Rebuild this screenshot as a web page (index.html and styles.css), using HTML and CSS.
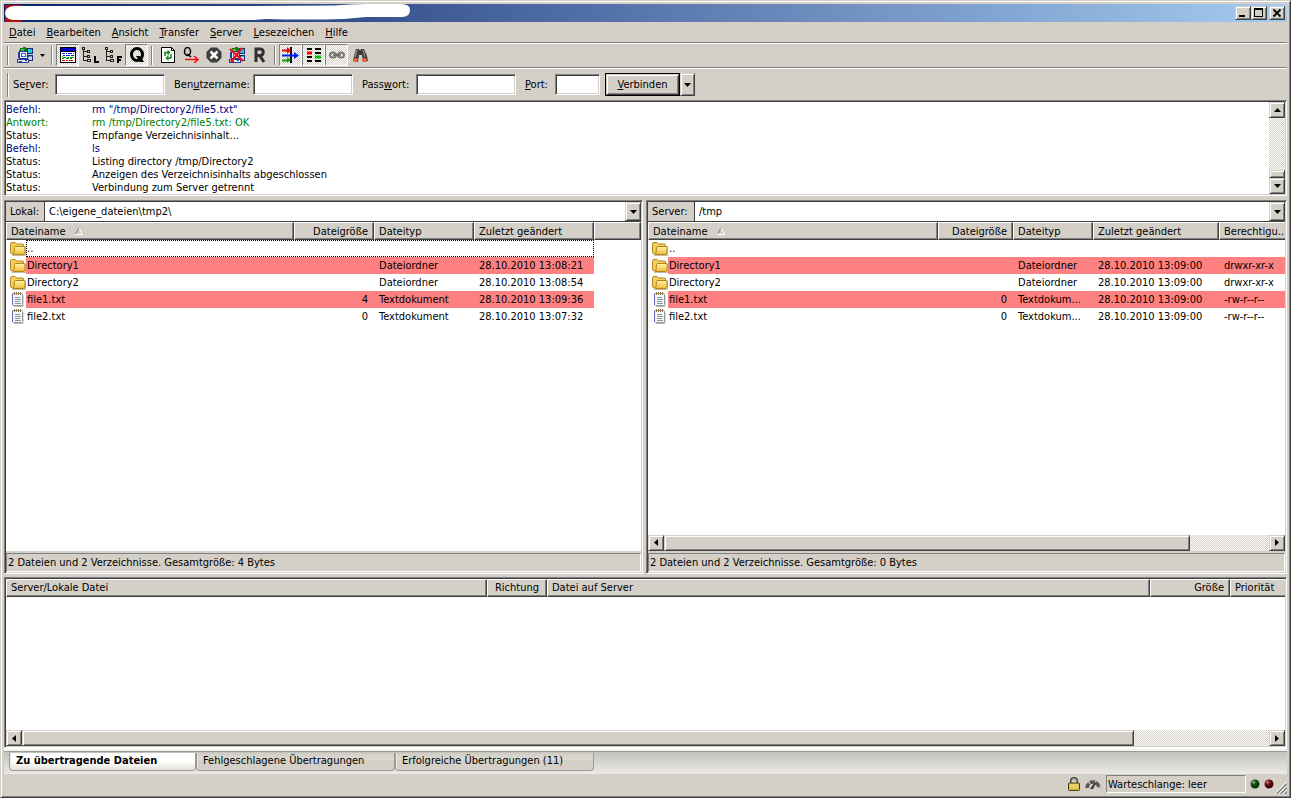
FILE: index.html
```html
<!DOCTYPE html>
<html lang="de">
<head>
<meta charset="utf-8">
<title>Dateiübertragung</title>
<link rel="stylesheet" href="styles.css">
</head>
<body>
<svg class="defs" aria-hidden="true">
  <defs>
    <linearGradient id="gold" x1="0" y1="0" x2="0" y2="1"><stop offset="0" stop-color="#fff6a8"/><stop offset="1" stop-color="#eebb38"/></linearGradient>
    <radialGradient id="green" cx=".35" cy=".3"><stop offset="0" stop-color="#a9c9a9"/><stop offset=".45" stop-color="#1d5f1d"/><stop offset="1" stop-color="#083808"/></radialGradient>
    <radialGradient id="red" cx=".35" cy=".3"><stop offset="0" stop-color="#d0a0a0"/><stop offset=".45" stop-color="#7d1818"/><stop offset="1" stop-color="#400606"/></radialGradient>
  </defs>
  <symbol id="folder" viewBox="0 0 16 16">
    <path d="M2 14.500h13.500v-9" fill="none" stroke="#c4bda4" stroke-width="1"/>
    <path d="M.5 3.500q0-2 1.500-2h3l1.500 1.500h6q1 0 1 1v9h-11q-2 0-2-2z" fill="#f3cf5c" stroke="#b5841c"/>
    <path d="M4.500 6.500q0-1 1-1h9q.500 0 .500.500v6q0 1.500-1.500 1.500h-9.500q-1 0-1-1 1 0 1-1z" fill="url(#gold)" stroke="#b5841c"/>
  </symbol>
  <symbol id="text" viewBox="0 0 16 16">
    <path d="M4 14.500h9v-11" fill="none" stroke="#b8b8ac"/>
    <path d="M2.500 1.500h9q1 0 1 1v10q0 1-1 1h-8l-1-1z" fill="#f6f8f8" stroke="#8f9a9c"/>
    <path d="M2.500 2v11" stroke="#6868bc" stroke-width="1"/>
    <path d="M4.500 0v3M6.500 0v3M8.500 0v3M10.500 0v3" stroke="#8b7a50"/>
    <path d="M5 5.500h5M5 7.500h6M5 9.500h5M5 11.500h6" stroke="#8b9698"/>
  </symbol>
  <symbol id="sites" viewBox="0 0 16 16">
    <g shape-rendering="crispEdges">
      <path d="M10 1h6v6h-6zM10 8h6v6h-6z" fill="#1a2a70"/><path d="M11 2h4v4h-4zM12 9h3v1h-3z" fill="#21c8d8"/><path d="M11 10h4v3h-4z" fill="#d4d0e8"/>
      <path d="M2 4h9v8H2zM1 5h1v6H1zM0 12h12v4H0z" fill="#2238a0"/><path d="M3 5h7v6H3zM1 13h10v2H1z" fill="#e4eef8"/><path d="M4 6h5v4H4z" fill="#3868d0"/><path d="M5 7h3v2H5z" fill="#fff"/><path d="M2 14h3v1H2zM8 13h2v1H8z" fill="#444"/>
      <path d="M2 3h1V1h3V0h3v1h1v3H2z" fill="#107818"/><path d="M4 2h3v2H4z" fill="#37cb37"/>
    </g>
  </symbol>
  <symbol id="log" viewBox="0 0 16 16"><g shape-rendering="crispEdges">
    <path d="M0 0h16v16H0z" fill="#000"/><path d="M1 1h14v3H1z" fill="#0000d0"/><path d="M1 5h14v10H1z" fill="#fff"/>
    <path d="M2 6h3v1H2zM6 6h1v1H6zM8 6h4v1H8zM13 6h1v1h-1zM3 8h2v1H3zM6 8h4v1H6zM11 8h3v1h-3z" fill="#0020f0"/>
    <path d="M2 9h1v1H2zM3 10h3v1H3zM7 10h2v1H7zM10 10h4v1h-4zM2 11h2v1H2zM6 11h3v1H6zM10 11h2v1h-2z" fill="#00a000"/>
    <path d="M2 13h3v1H2zM6 13h2v1H6zM9 13h4v1H9z" fill="#e00000"/></g>
  </symbol>
  <symbol id="tree" viewBox="0 0 17 17"><g shape-rendering="crispEdges" fill="none" stroke="#222">
    <path d="M.5.500h2v2h-2zM5.500 3.500h2v2h-2zM5.500 8.500h2v2h-2zM1.500 3v10.500h4M2 4.500h3M2 9.500h3"/><path d="M5.500 12.500h3v2h-3z"/></g>
  </symbol>
  <symbol id="cross" viewBox="0 0 16 16"><path d="M1 2l13 12M13 1L2 15" stroke="#f01010" stroke-width="2.200" fill="none"/></symbol>
</svg>

<div class="window">
  <header class="titlebar">
    <svg class="stroke" viewBox="0 0 408 20" width="408" height="20" aria-hidden="true">
      <path d="M1 1h17v17H1z" fill="#b01010"/>
      <path d="M10 2H250L330 1.500Q346 0 362 0H397Q406 0 406 6Q406 13 398 13H362L340 15Q300 16 262 15L250 16H9Q1 15 1 9Q1 3 10 2z" fill="#fff"/>
    </svg>
    <div class="winbtns">
      <button class="raised" aria-label="Minimieren"><svg width="12" height="10"><path d="M2 7h6v2H2z"/></svg></button>
      <button class="raised" aria-label="Maximieren"><svg width="12" height="10"><path d="M1 0h9v9H1zM2 2v6h7V2z" fill-rule="evenodd"/></svg></button>
      <button class="raised close" aria-label="Schließen"><svg width="12" height="10"><path d="M2.500 1.500l7 7M9.500 1.500l-7 7" stroke="#000" stroke-width="1.800"/></svg></button>
    </div>
  </header>

  <nav class="menu">
    <button><u>D</u>atei</button><button><u>B</u>earbeiten</button><button><u>A</u>nsicht</button><button><u>T</u>ransfer</button><button><u>S</u>erver</button><button><u>L</u>esezeichen</button><button><u>H</u>ilfe</button>
  </nav>

  <div class="toolbar">
    <span class="grip"></span>
    <button aria-label="Servermanager"><svg width="16" height="16"><use href="#sites"/></svg></button>
    <button class="narrow" aria-label="Serverliste"><svg width="5" height="3"><path d="M0 0h5L2.500 3z"/></svg></button>
    <span class="grip"></span>
    <button class="on" aria-label="Nachrichten"><svg width="16" height="16"><use href="#log"/></svg></button>
    <button aria-label="Lokaler Verzeichnisbaum"><svg width="17" height="17"><use href="#tree"/><path d="M12 9h2v5h3v2h-5z"/></svg></button>
    <button aria-label="Server-Verzeichnisbaum"><svg width="17" height="17"><use href="#tree"/><path d="M12 9h5v2h-3v1h2v2h-2v2h-2z"/></svg></button>
    <button class="on" aria-label="Warteschlange"><svg width="16" height="16"><ellipse cx="8" cy="7.500" rx="5.500" ry="6" fill="none" stroke="#000" stroke-width="3"/><path d="M7 9h4l4 6h-4z"/></svg></button>
    <span class="grip"></span>
    <button aria-label="Aktualisieren"><svg width="14" height="16"><path d="M.5.500h10l3 3v12H.5z" fill="#fff" stroke="#000"/><path d="M10.500.500v3h3" fill="none" stroke="#000"/><path d="M4 9V5.500h3M10 7v4H7" fill="none" stroke="#108818" stroke-width="1.500"/><path d="M6.500 2.500l3 3-3 3zM7.500 8l-3 3 3 3z" fill="#108818"/></svg></button>
    <button aria-label="Warteschlange verarbeiten"><svg width="16" height="16"><ellipse cx="4.500" cy="4.500" rx="3" ry="4" fill="none" stroke="#000" stroke-width="1.500"/><path d="M4 7l4 3" stroke="#000" stroke-width="1.500"/><path d="M2 12.500h13M11 9l4 3.500-4 3.500" fill="none" stroke="#f01010" stroke-width="1.600"/></svg></button>
    <button aria-label="Abbrechen"><svg width="16" height="16"><path d="M5 .500h6L15.500 5v6L11 15.500H5L.5 11V5z" fill="#3c3c3c"/><path d="M4.500 4.500l7 7M11.500 4.500l-7 7" stroke="#fff" stroke-width="2.500"/></svg></button>
    <button aria-label="Trennen"><svg width="16" height="16"><use href="#sites"/><use href="#cross"/></svg></button>
    <button aria-label="Wiederverbinden"><svg width="14" height="16"><path d="M3 15V2h4.500a3.300 3.300 0 010 6.500H4M7 9l4 6" fill="none" stroke="#303030" stroke-width="3"/></svg></button>
    <span class="grip"></span>
    <button class="on" aria-label="Filter"><svg width="17" height="16"><path d="M8 0h2v16H8z"/><path d="M0 3.500h6" stroke="#f00000" stroke-width="2"/><path d="M5 0l4 3.500L5 7z" fill="#f00000"/><path d="M0 8.500h13" stroke="#0020f0" stroke-width="2"/><path d="M12 5l5 3.500-5 3.500z" fill="#0020f0"/><path d="M0 13.500h6" stroke="#10a010" stroke-width="2"/><path d="M5 10l4 3-4 3z" fill="#10a010"/></svg></button>
    <button class="on" aria-label="Verzeichnisvergleich"><svg width="16" height="15"><path d="M1 1h5M9 1h6M9 5h6M1 9h5M1 13h5M9 13h6" stroke="#000" stroke-width="2"/><path d="M1 5h5" stroke="#f00000" stroke-width="3"/><path d="M9 9h6" stroke="#00c000" stroke-width="3"/></svg></button>
    <button class="on" aria-label="Synchronisiertes Browsen"><svg width="16" height="8"><ellipse cx="4" cy="4" rx="3" ry="2.500" fill="none" stroke="#777" stroke-width="2"/><ellipse cx="12" cy="4" rx="3" ry="2.500" fill="none" stroke="#777" stroke-width="2"/><path d="M4 4h8" stroke="#666" stroke-width="1.500"/></svg></button>
    <button aria-label="Suchen"><svg width="16" height="15"><path d="M4 1h3l1 2 1-2h3l3 7 1 5-5 1-1-7H7l-1 7-5-1 1-5z" fill="#3a3a3a"/><path d="M5 2L3 9M11 2l2 7" stroke="#888" stroke-width="1.500"/><ellipse cx="3.500" cy="12" rx="2.500" ry="2" fill="#f06038"/><ellipse cx="12.500" cy="12" rx="2.500" ry="2" fill="#f06038"/></svg></button>
  </div>

  <form class="quick">
    <span class="grip"></span>
    <label class="l-server" for="host">Se<u>r</u>ver:</label><input id="host" class="w-host" type="text">
    <label class="l-user" for="user">Ben<u>u</u>tzername:</label><input id="user" class="w-user" type="text">
    <label class="l-pass" for="pass">Pass<u>w</u>ort:</label><input id="pass" class="w-user" type="password">
    <label class="l-port" for="port"><u>P</u>ort:</label><input id="port" class="w-port" type="text">
    <button type="button" class="connect"><span class="raised"><span><u>V</u>erbinden</span></span></button>
    <button type="button" class="raised drop" aria-label="Verlauf"><svg width="7" height="4"><path d="M0 0h7L3.500 4z"/></svg></button>
  </form>

  <section class="log sunken">
    <div class="lines">
      <div class="cmd"><span>Befehl:</span><span>rm "/tmp/Directory2/file5.txt"</span></div>
      <div class="ans"><span>Antwort:</span><span>rm /tmp/Directory2/file5.txt: OK</span></div>
      <div><span>Status:</span><span>Empfange Verzeichnisinhalt...</span></div>
      <div class="cmd"><span>Befehl:</span><span>ls</span></div>
      <div><span>Status:</span><span>Listing directory /tmp/Directory2</span></div>
      <div><span>Status:</span><span>Anzeigen des Verzeichnisinhalts abgeschlossen</span></div>
      <div><span>Status:</span><span>Verbindung zum Server getrennt</span></div>
    </div>
    <div class="vscroll">
      <button class="raised" aria-label="Nach oben"><svg width="7" height="4"><path d="M0 4h7L3.500 0z"/></svg></button>
      <span class="track"></span><span class="thumb raised"></span>
      <button class="raised" aria-label="Nach unten"><svg width="7" height="4"><path d="M0 0h7L3.500 4z"/></svg></button>
    </div>
  </section>

  <main class="panes">
    <section class="pane local sunken">
      <div class="path"><label for="lpath">Lokal:</label><select id="lpath"><option>C:\eigene_dateien\tmp2\</option></select><span class="raised arrow"><svg width="7" height="4"><path d="M0 0h7L3.500 4z"/></svg></span></div>
      <div class="list">
        <table>
          <colgroup><col class="c20"><col class="c268"><col class="c80"><col class="c100"><col class="c120"><col></colgroup>
          <thead><tr><th colspan="2">Dateiname<svg class="sort" width="8" height="8"><path d="M.5 7.500L4 .500" stroke="#808080" fill="none"/><path d="M4 .500l3.500 7H0" stroke="#fff" fill="none"/></svg></th><th class="num">Dateigröße</th><th>Dateityp</th><th>Zuletzt geändert</th><th></th></tr></thead>
          <tbody>
            <tr class="focus"><td><svg width="16" height="16"><use href="#folder"/></svg></td><td colspan="4">..</td><td></td></tr>
            <tr class="diff"><td><svg width="16" height="16"><use href="#folder"/></svg></td><td>Directory1</td><td></td><td>Dateiordner</td><td>28.10.2010 13:08:21</td><td class="rest"></td></tr>
            <tr><td><svg width="16" height="16"><use href="#folder"/></svg></td><td>Directory2</td><td></td><td>Dateiordner</td><td>28.10.2010 13:08:54</td><td></td></tr>
            <tr class="diff"><td><svg width="16" height="16"><use href="#text"/></svg></td><td>file1.txt</td><td class="num">4</td><td>Textdokument</td><td>28.10.2010 13:09:36</td><td class="rest"></td></tr>
            <tr><td><svg width="16" height="16"><use href="#text"/></svg></td><td>file2.txt</td><td class="num">0</td><td>Textdokument</td><td>28.10.2010 13:07:32</td><td></td></tr>
          </tbody>
        </table>
      </div>
      <div class="summary">2 Dateien und 2 Verzeichnisse. Gesamtgröße: 4 Bytes</div>
    </section>

    <section class="pane remote sunken">
      <div class="path"><label for="rpath">Server:</label><select id="rpath"><option>/tmp</option></select><span class="raised arrow"><svg width="7" height="4"><path d="M0 0h7L3.500 4z"/></svg></span></div>
      <div class="list">
        <table>
          <colgroup><col class="c20"><col class="c270"><col class="c75"><col class="c80"><col class="c126"><col></colgroup>
          <thead><tr><th colspan="2">Dateiname<svg class="sort" width="8" height="8"><path d="M.5 7.500L4 .500" stroke="#808080" fill="none"/><path d="M4 .500l3.500 7H0" stroke="#fff" fill="none"/></svg></th><th class="num">Dateigröße</th><th>Dateityp</th><th>Zuletzt geändert</th><th class="last">Berechtigu..</th></tr></thead>
          <tbody>
            <tr><td><svg width="16" height="16"><use href="#folder"/></svg></td><td>..</td><td></td><td></td><td></td><td></td></tr>
            <tr class="diff"><td><svg width="16" height="16"><use href="#folder"/></svg></td><td>Directory1</td><td></td><td>Dateiordner</td><td>28.10.2010 13:09:00</td><td>drwxr-xr-x</td></tr>
            <tr><td><svg width="16" height="16"><use href="#folder"/></svg></td><td>Directory2</td><td></td><td>Dateiordner</td><td>28.10.2010 13:09:00</td><td>drwxr-xr-x</td></tr>
            <tr class="diff"><td><svg width="16" height="16"><use href="#text"/></svg></td><td>file1.txt</td><td class="num">0</td><td>Textdokum...</td><td>28.10.2010 13:09:00</td><td>-rw-r--r--</td></tr>
            <tr><td><svg width="16" height="16"><use href="#text"/></svg></td><td>file2.txt</td><td class="num">0</td><td>Textdokum...</td><td>28.10.2010 13:09:00</td><td>-rw-r--r--</td></tr>
          </tbody>
        </table>
      </div>
      <div class="hscroll">
        <button class="raised" aria-label="Nach links"><svg width="4" height="7"><path d="M4 0v7L0 3.500z"/></svg></button>
        <div class="track"><div class="thumb raised" style="width:87%"></div></div>
        <button class="raised" aria-label="Nach rechts"><svg width="4" height="7"><path d="M0 0v7l4-3.500z"/></svg></button>
      </div>
      <div class="summary">2 Dateien und 2 Verzeichnisse. Gesamtgröße: 0 Bytes</div>
    </section>
  </main>

  <section class="queue sunken">
    <div class="list">
      <table>
        <colgroup><col class="c481"><col class="c60"><col class="c603"><col class="c80"><col></colgroup>
        <thead><tr><th>Server/Lokale Datei</th><th class="mid">Richtung</th><th>Datei auf Server</th><th class="num">Größe</th><th class="last">Priorität</th></tr></thead>
      </table>
    </div>
    <div class="hscroll">
      <button class="raised" aria-label="Nach links"><svg width="4" height="7"><path d="M4 0v7L0 3.500z"/></svg></button>
      <div class="track"><div class="thumb raised" style="width:89.2%"></div></div>
      <button class="raised" aria-label="Nach rechts"><svg width="4" height="7"><path d="M0 0v7l4-3.500z"/></svg></button>
    </div>
  </section>

  <div class="tabs" role="tablist">
    <button role="tab" aria-selected="true" class="active">Zu übertragende Dateien</button>
    <button role="tab" aria-selected="false">Fehlgeschlagene Übertragungen</button>
    <button role="tab" aria-selected="false">Erfolgreiche Übertragungen (11)</button>
  </div>

  <footer class="status">
    <svg width="12" height="14"><path d="M3 6V4a3 3 0 016 0v2" fill="none" stroke="#404040" stroke-width="2"/><path d="M3.500 6V4a2.500 2.500 0 015 0v2" fill="none" stroke="#ccc" stroke-width=".6"/><rect x=".5" y="6" width="11" height="7.500" rx="1" fill="#d9bd48" stroke="#4a3d10"/><path d="M2 8h8M2 10h8" stroke="#f4e69a"/></svg>
    <svg class="gauge" width="16" height="12"><path d="M2 10a6 6 0 0112 0" fill="none" stroke="#555" stroke-width="3.500" stroke-dasharray="5 1"/><path d="M5 11l5-7 1 1-3 6z" fill="#333"/></svg>
    <span class="field">Warteschlange: leer</span>
    <svg width="10" height="10"><circle cx="5" cy="5" r="4.500" fill="url(#green)"/></svg>
    <svg class="led" width="10" height="10"><circle cx="5" cy="5" r="4.500" fill="url(#red)"/></svg>
    <svg class="sizegrip" width="12" height="13"><path d="M0 13L12 1M4 13l8-8M8 13l4-4" stroke="#fff" stroke-width="1.200"/><path d="M1.500 13L12 2.500M5.500 13L12 6.500M9.500 13l2.500-2.500" stroke="#808080" stroke-width="1.500"/></svg>
  </footer>
</div>
</body>
</html>
```
FILE: styles.css
```css
* { box-sizing: border-box; }
body, button, input, select, table {
  font-family: "DejaVu Sans Condensed", "DejaVu Sans", sans-serif;
  font-size: 11px;
  line-height: 13px;
  color: #000;
}
body { margin: 0; background: #d4d0c8; }
button { padding: 0; border: 0; background: none; }
svg { display: block; flex: none; }
.defs { position: absolute; width: 0; height: 0; }

.window {
  display: flex;
  flex-direction: column;
  height: 100vh;
  padding: 3px;
  border: 1px solid;
  border-color: #d4d0c8 #404040 #404040 #d4d0c8;
  box-shadow: inset 1px 1px #fff, inset -1px -1px #808080;
}
.raised {
  background: #d4d0c8;
  border: 1px solid;
  border-color: #d4d0c8 #404040 #404040 #d4d0c8;
  box-shadow: inset 1px 1px #fff, inset -1px -1px #808080;
  display: flex;
  align-items: center;
  justify-content: center;
}
.sunken {
  border: 1px solid;
  border-color: #808080 #fff #fff #808080;
  box-shadow: inset 1px 1px #404040, inset -1px -1px #d4d0c8;
  padding: 1px;
}

.titlebar {
  position: relative;
  flex: none;
  height: 18px;
  background: linear-gradient(90deg, #0a246a, #a6caf0);
  display: flex;
  justify-content: flex-end;
  align-items: center;
  padding-right: 2px;
}
.stroke { position: absolute; left: 0; top: 0; }
.winbtns { display: flex; }
.winbtns button { width: 16px; height: 14px; }
.winbtns .close { margin-left: 2px; }

.menu { display: flex; gap: 11px; height: 20px; padding: 0 5px; flex: none; align-items: center; }

.toolbar, .quick {
  display: flex;
  flex: none;
  align-items: center;
  border-top: 1px solid #808080;
  box-shadow: inset 0 1px #fff;
}
.toolbar { height: 25px; padding: 1px 3px; }
.toolbar button { width: 23px; height: 22px; display: flex; align-items: center; justify-content: center; }
.toolbar .narrow { width: 12px; }
.grip { width: 2px; height: 19px; margin: 0 3px; border-left: 1px solid #808080; border-right: 1px solid #fff; flex: none; }
.toolbar .grip:first-child { margin: 0 4px 0 0; }
.toolbar .on {
  border: 1px solid;
  border-color: #808080 #fff #fff #808080;
  background: repeating-conic-gradient(#fff 0 25%, #d4d0c8 0 50%) 0 0 / 2px 2px;
}

.quick { height: 33px; padding: 1px 3px 0; }
.quick .grip { height: 24px; margin: 0 4px 0 0; }
.quick input {
  height: 21px;
  margin-right: 9px;
  border: 1px solid;
  border-color: #808080 #fff #fff #808080;
  box-shadow: inset 1px 1px #404040, inset -1px -1px #d4d0c8;
  background: #fff;
}
.l-server { width: 42px; }
.l-user { width: 79px; }
.l-pass { width: 54px; }
.l-port { width: 30px; }
.w-host { width: 110px; }
.w-user { width: 100px; }
.quick .w-port { width: 45px; margin-right: 5px; }
.connect { width: 75px; height: 23px; border: 1px solid #000; display: flex; }
.connect .raised { flex: 1; }
.drop { width: 15px; height: 23px; }

.log { display: flex; flex: none; background: #fff; }
.lines { flex: 1; padding-top: 1px; }
.lines div { display: flex; }
.lines span:first-child { width: 86px; }
.cmd { color: #000080; }
.ans { color: #008000; }
.vscroll { width: 16px; display: flex; flex-direction: column; }
.vscroll button { height: 16px; width: 16px; }
.track { flex: 1; background: repeating-conic-gradient(#fff 0 25%, #d4d0c8 0 50%) 0 0 / 2px 2px; }
.vscroll .thumb { height: 8px; }

.panes { display: flex; flex: 376 1 0; min-height: 0; gap: 3px; margin-top: 4px; }
.pane { display: flex; flex-direction: column; min-width: 0; }
.local { flex: 639 1 0; }
.remote { flex: 641 1 0; }
.path { display: flex; height: 20px; flex: none; border-bottom: 1px solid #404040; background: #fff; }
.path label { display: flex; align-items: center; background: #d4d0c8; border-right: 1px solid #404040; padding-left: 4px; width: 39px; }
.remote .path label { width: 47px; }
.path select { flex: 1; min-width: 0; appearance: none; border: 0; padding: 0 4px; background: #fff; }
.arrow { width: 16px; }

.list { flex: 1; min-height: 0; overflow: hidden; background: #fff; }
table { width: 100%; table-layout: fixed; border-collapse: separate; border-spacing: 0; }
th {
  height: 18px;
  padding: 0 5px 0 4px;
  text-align: left;
  font-weight: normal;
  white-space: nowrap;
  overflow: hidden;
  background: #d4d0c8;
  border: 1px solid;
  border-color: #fff #404040 #404040 #fff;
  box-shadow: inset -1px -1px #808080;
}
td { height: 17px; padding: 0 6px 0 5px; white-space: nowrap; overflow: hidden; }
td:first-child { padding: 0 0 0 4px; }
td:nth-child(2) { padding-left: 1px; }
.num { text-align: right; }
.mid { text-align: center; padding: 0; }
.last { border-right: 0; padding-right: 0; box-shadow: inset 0 -1px #808080; }
.sort { display: inline-block; margin-left: 10px; }
.diff td:not(:first-child):not(.rest) { background: #ff8080; }
.focus td:nth-child(2) { outline: 1px dotted #000; outline-offset: -1px; }
.c20 { width: 20px; }
.c60 { width: 60px; }
.c75 { width: 75px; }
.c80 { width: 80px; }
.c100 { width: 100px; }
.c120 { width: 120px; }
.c126 { width: 126px; }
.c268 { width: 268px; }
.c270 { width: 270px; }
.c481 { width: 481px; }
.c603 { width: 603px; }

.summary {
  flex: none;
  height: 19px;
  margin-top: 2px;
  padding: 0 1px;
  line-height: 17px;
  border: 1px solid;
  border-color: #808080 #fff #fff #808080;
}
.hscroll { display: flex; height: 16px; flex: none; }
.hscroll button { width: 16px; height: 16px; flex: none; }
.hscroll .thumb { height: 16px; }

.queue { display: flex; flex-direction: column; flex: 168 1 0; min-height: 0; margin-top: 3px; }

.tabs {
  display: flex;
  flex: none;
  height: 26px;
  padding: 4px 5px 3px;
  border-top: 1px solid #fff;
  background: linear-gradient(#f4f4f0 0 2px, #9c9a94 2px 3px, #c4c2bc 3px, #ebeae8);
}
.tabs button {
  width: 199px;
  padding: 0 6px 2px;
  text-align: left;
  border: 1px solid #9c9a90;
  border-top: 0;
  border-radius: 0 0 4px 4px;
  background: linear-gradient(#d0cdc5, #dedbd5 40%, #d4d0c8 41%);
  box-shadow: inset 1px 0 #eceae6;
}
.tabs .active { width: 187px; font-weight: bold; background: linear-gradient(#fff 50%, #e2e2da); }

.status { display: flex; flex: none; height: 20px; align-items: center; justify-content: flex-end; }
.gauge { margin-left: 5px; }
.field {
  width: 140px;
  height: 18px;
  margin: 0 4px 0 5px;
  padding: 0 1px;
  line-height: 17px;
  border: 1px solid;
  border-color: #808080 #fff #fff #808080;
}
.led { margin: 0 1px 0 4px; }
.sizegrip { align-self: flex-end; }
```
